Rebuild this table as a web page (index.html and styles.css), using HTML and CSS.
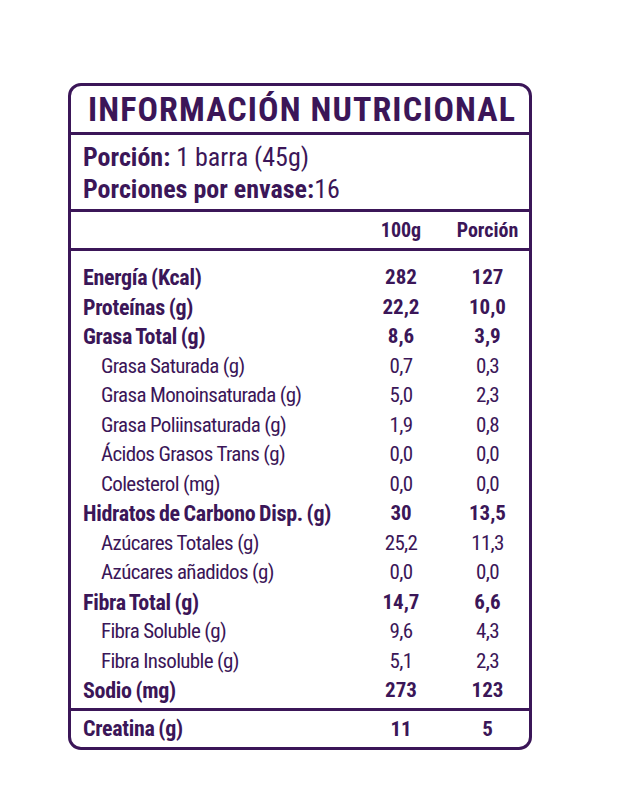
FILE: index.html
```html
<!DOCTYPE html>
<html lang="es">
<head>
<meta charset="utf-8">
<title>Información Nutricional</title>
<link rel="stylesheet" href="styles.css">
</head>
<body>
<div class="label">
  <div class="title">INFORMACIÓN NUTRICIONAL</div>
  <div class="serving">
    <div><b>Porción:</b> 1 barra (45g)</div>
    <div><b>Porciones por envase:</b>16</div>
  </div>
  <div class="grid colhead">
    <span></span><span class="num">100g</span><span class="num">Porción</span>
  </div>
  <div class="grid rows">
    <span class="b">Energía (Kcal)</span><span class="num b">282</span><span class="num b">127</span>
    <span class="b">Proteínas (g)</span><span class="num b">22,2</span><span class="num b">10,0</span>
    <span class="b">Grasa Total (g)</span><span class="num b">8,6</span><span class="num b">3,9</span>
    <span class="sub">Grasa Saturada (g)</span><span class="num">0,7</span><span class="num">0,3</span>
    <span class="sub">Grasa Monoinsaturada (g)</span><span class="num">5,0</span><span class="num">2,3</span>
    <span class="sub">Grasa Poliinsaturada (g)</span><span class="num">1,9</span><span class="num">0,8</span>
    <span class="sub">Ácidos Grasos Trans (g)</span><span class="num">0,0</span><span class="num">0,0</span>
    <span class="sub">Colesterol (mg)</span><span class="num">0,0</span><span class="num">0,0</span>
    <span class="b">Hidratos de Carbono Disp. (g)</span><span class="num b">30</span><span class="num b">13,5</span>
    <span class="sub">Azúcares Totales (g)</span><span class="num">25,2</span><span class="num">11,3</span>
    <span class="sub">Azúcares añadidos (g)</span><span class="num">0,0</span><span class="num">0,0</span>
    <span class="b">Fibra Total (g)</span><span class="num b">14,7</span><span class="num b">6,6</span>
    <span class="sub">Fibra Soluble (g)</span><span class="num">9,6</span><span class="num">4,3</span>
    <span class="sub">Fibra Insoluble (g)</span><span class="num">5,1</span><span class="num">2,3</span>
    <span class="b">Sodio (mg)</span><span class="num b">273</span><span class="num b">123</span>
  </div>
  <div class="grid extra">
    <span class="b">Creatina (g)</span><span class="num b">11</span><span class="num b">5</span>
  </div>
</div>
</body>
</html>
```
FILE: styles.css
```css
html, body {
  margin: 0;
  padding: 0;
  background: #ffffff;
}
body {
  font-family: "Roboto Condensed", "Liberation Sans Narrow", "DejaVu Sans Condensed", Roboto, sans-serif;
  font-stretch: condensed;
  color: #3b1658;
  padding: 83px 0 0 68px;
}
.label {
  width: 464px;
  box-sizing: border-box;
  border: 3px solid #3b1658;
  border-radius: 13px;
}
.title {
  font-weight: 700;
  font-size: 34px;
  letter-spacing: 1.1px;
  line-height: 46px;
  padding-left: 17px;
  border-bottom: 3px solid #3b1658;
}
.serving {
  font-size: 26px;
  line-height: 32px;
  padding: 6px 0 4px 12px;
  border-bottom: 3px solid #3b1658;
}
.serving b { font-weight: 700; }
.grid {
  display: grid;
  grid-template-columns: 1fr 70px 83px;
  column-gap: 10px;
  padding-left: 12px;
  font-size: 21px;
  letter-spacing: -0.65px;
}
.colhead {
  font-weight: 700;
  font-size: 20px;
  letter-spacing: 0;
  line-height: 36px;
  border-bottom: 3px solid #3b1658;
}
.rows {
  line-height: 29.5px;
  padding-top: 12px;
  padding-bottom: 2px;
  border-bottom: 3px solid #3b1658;
}
.extra {
  line-height: 36px;
}
.num { text-align: center; }
.b { font-weight: 700; font-size: 22px; letter-spacing: -0.3px; word-spacing: -1px; }
.num.b { font-size: 21px; letter-spacing: 0; }
.sub { padding-left: 18px; }
```
